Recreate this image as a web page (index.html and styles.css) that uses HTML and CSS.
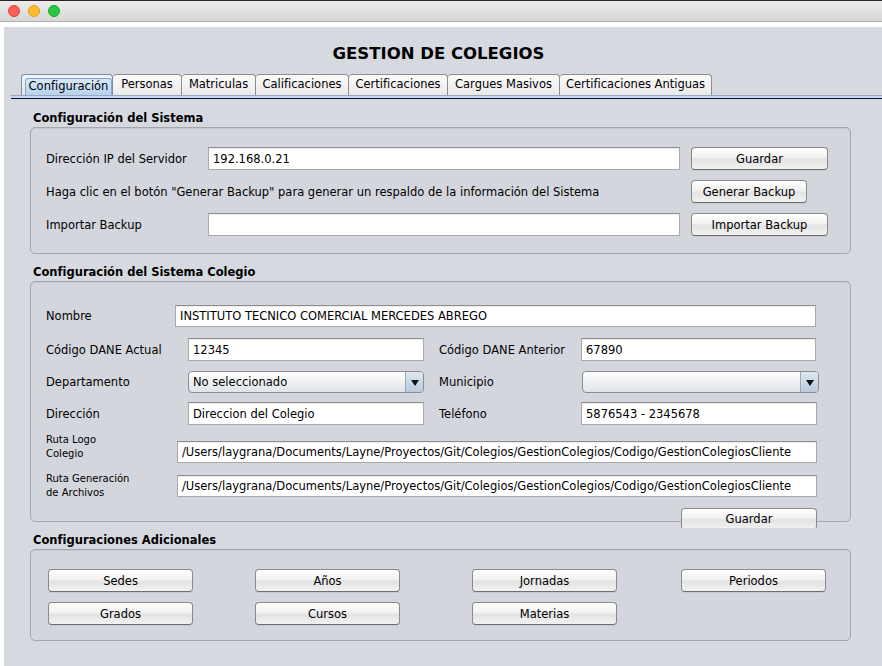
FILE: index.html
```html
<!DOCTYPE html>
<html lang="es">
<head>
<meta charset="utf-8">
<title>Gestion de Colegios</title>
<link rel="stylesheet" href="styles.css">
</head>
<body>
<div class="window">
  <div class="titlebar">
    <span class="light red"></span>
    <span class="light yellow"></span>
    <span class="light green"></span>
  </div>
  <div class="frame">
    <div class="app">
      <h1 class="app-title">GESTION DE COLEGIOS</h1>
      <div class="tabs">
        <div class="tab selected"><span>Configuración</span></div>
        <div class="tab"><span>Personas</span></div>
        <div class="tab"><span>Matriculas</span></div>
        <div class="tab"><span>Calificaciones</span></div>
        <div class="tab"><span>Certificaciones</span></div>
        <div class="tab"><span>Cargues Masivos</span></div>
        <div class="tab"><span>Certificaciones Antiguas</span></div>
      </div>
      <div class="tab-rule"></div>
      <div class="tab-content">
        <div class="group-title first">Configuración del Sistema</div>
        <div class="group group-sistema">
          <div class="row r-ip">
            <span class="lbl w162">Dirección IP del Servidor</span>
            <div class="field w472">192.168.0.21</div>
            <button class="btn w137">Guardar</button>
          </div>
          <div class="row r-gen">
            <span class="lbl w645">Haga clic en el botón "Generar Backup" para generar un respaldo de la información del Sistema</span>
            <button class="btn w116">Generar Backup</button>
          </div>
          <div class="row r-imp">
            <span class="lbl w162">Importar Backup</span>
            <div class="field w472"></div>
            <button class="btn w137">Importar Backup</button>
          </div>
        </div>

        <div class="group-title">Configuración del Sistema Colegio</div>
        <div class="group group-colegio">
          <div class="row c1">
            <span class="lbl w129">Nombre</span>
            <div class="field w641">INSTITUTO TECNICO COMERCIAL MERCEDES ABREGO</div>
          </div>
          <div class="row c2">
            <span class="lbl w142">Código DANE Actual</span>
            <div class="field w236">12345</div>
            <span class="lbl w142 col2">Código DANE Anterior</span>
            <div class="field w235">67890</div>
          </div>
          <div class="row c3">
            <span class="lbl w142">Departamento</span>
            <div class="combo w236"><span class="combo-text">No seleccionado</span><span class="combo-arrow"></span></div>
            <span class="lbl w143 col2">Municipio</span>
            <div class="combo w236"><span class="combo-text"></span><span class="combo-arrow"></span></div>
          </div>
          <div class="row c4">
            <span class="lbl w142">Dirección</span>
            <div class="field w236">Direccion del Colegio</div>
            <span class="lbl w142 col2">Teléfono</span>
            <div class="field w236">5876543 - 2345678</div>
          </div>
          <div class="row c5">
            <span class="lbl small w131">Ruta Logo<br>Colegio</span>
            <div class="field w640">/Users/laygrana/Documents/Layne/Proyectos/Git/Colegios/GestionColegios/Codigo/GestionColegiosCliente</div>
          </div>
          <div class="row c6">
            <span class="lbl small w131">Ruta Generación<br>de Archivos</span>
            <div class="field w640">/Users/laygrana/Documents/Layne/Proyectos/Git/Colegios/GestionColegios/Codigo/GestionColegiosCliente</div>
          </div>
          <div class="row c7">
            <div class="clip"><button class="btn w136">Guardar</button></div>
          </div>
        </div>

        <div class="group-title">Configuraciones Adicionales</div>
        <div class="group group-extra">
          <div class="btn-grid">
            <button class="btn">Sedes</button>
            <button class="btn">Años</button>
            <button class="btn">Jornadas</button>
            <button class="btn">Periodos</button>
            <button class="btn">Grados</button>
            <button class="btn">Cursos</button>
            <button class="btn">Materias</button>
          </div>
        </div>
      </div>
    </div>
  </div>
</div>
</body>
</html>
```
FILE: styles.css
```css
* { box-sizing: border-box; }
html, body { margin: 0; padding: 0; }
body {
  width: 882px;
  height: 666px;
  overflow: hidden;
  background: #ffffff;
  font-family: "DejaVu Sans", "Liberation Sans", sans-serif;
  font-size: 11.5px;
  color: #000;
}
.window { width: 882px; height: 666px; display: flex; flex-direction: column; }

.titlebar {
  height: 22px;
  flex: none;
  border-top: 1px solid #2b2424;
  border-bottom: 1px solid #b3b3b3;
  background: linear-gradient(#ececec, #d6d6d6);
  display: flex;
  align-items: center;
  gap: 8px;
  padding-left: 8px;
}
.light { width: 12px; height: 12px; border-radius: 50%; display: block; }
.red { background: #fc5f57; border: 1px solid #e0443e; }
.yellow { background: #fdbc2e; border: 1px solid #dea123; }
.green { background: #28c840; border: 1px solid #1aab29; }

.frame { flex: 1; padding: 5px 0 0 4px; background: #ffffff; display: flex; }
.app { flex: 1; background: #d6d9df; display: flex; flex-direction: column; }

.app-title {
  margin: 15px 0 0;
  height: 24px;
  line-height: 24px;
  text-align: center;
  font-size: 16.5px;
  font-weight: bold;
  padding-right: 9px;
}

.tabs { display: flex; margin: 8px 0 0 17px; height: 21px; }
.tab {
  height: 21px;
  padding: 0;
  justify-content: center;
  border: 1px solid #8d8d8d;
  border-bottom: none;
  border-left: none;
  border-radius: 4px 4px 0 0;
  background: linear-gradient(#fbfbfb, #e9e9e9);
  display: flex;
  align-items: center;
  line-height: 1;
  white-space: nowrap;
}
.tab:first-child { border-left: 1px solid #8d8d8d; }
.tab:nth-child(1) { width: 92px; }
.tab:nth-child(2) { width: 69px; }
.tab:nth-child(3) { width: 74px; }
.tab:nth-child(4) { width: 93px; }
.tab:nth-child(5) { width: 99px; }
.tab:nth-child(6) { width: 112px; }
.tab:nth-child(7) { width: 152px; }
.tab.selected {
  padding: 3px 0 0 3px;
  align-items: stretch;
  background: linear-gradient(#f4f4f4, #e6e6e6);
  border-color: #7b8ea8;
}
.tab.selected span {
  flex: 1;
  display: flex;
  align-items: center;
  justify-content: center;
  border: 1px solid #7fa6d6;
  border-bottom: none;
  border-radius: 3px 3px 0 0;
  background: linear-gradient(#d9e8f8, #b6d1ef);
}
.tab-rule {
  margin-left: 7px;
  height: 4px;
  border-top: 1px solid #9aa8ba;
  border-bottom: 1px solid #101030;
  background: #c4d8ef;
}

.tab-content { display: flex; flex-direction: column; padding: 0 31px 0 26px; }

.group-title {
  height: 17px;
  line-height: 17px;
  margin: 10px 0 0 3px;
  font-weight: bold;
  font-size: 11.5px;
}
.group-title.first { margin-top: 11px; }

.group {
  border: 1px solid #a4a6ab;
  border-radius: 5px;
  background: #d3d6dc;
  box-shadow: inset 0 1px 0 #c6c9cf;
  padding-left: 15px;
  display: flex;
  flex-direction: column;
}
.group-sistema { height: 127px; padding-top: 19px; }
.group-colegio { height: 241px; padding-top: 23px; }
.group-extra { height: 92px; padding-top: 19px; padding-left: 17px; }

.row { display: flex; align-items: center; }
.r-ip, .r-imp, .r-gen { height: 23px; }
.r-gen, .r-imp { margin-top: 10px; }

.lbl { flex: none; white-space: nowrap; }
.lbl.small { font-size: 10px; line-height: 14px; white-space: normal; }
.col2 { margin-left: 15px; }

.w129 { width: 129px; } .w131 { width: 131px; } .w142 { width: 142px; } .w143 { width: 143px; }
.w162 { width: 162px; } .w645 { width: 645px; }
.w116 { width: 116px; } .w136 { width: 136px; } .w137 { width: 137px; }
.w235 { width: 235px; } .w236 { width: 236px; } .w472 { width: 472px; }
.w640 { width: 640px; } .w641 { width: 641px; }

.field {
  flex: none;
  height: 23px;
  background: #ffffff;
  border: 1px solid #a9a9a9;
  border-top-color: #8e8e8e;
  box-shadow: inset 0 1px 1px rgba(0,0,0,0.08);
  padding: 0 4px;
  display: flex;
  align-items: center;
  white-space: nowrap;
  overflow: hidden;
  font-size: 11.5px;
}
.r-ip .field { margin-right: 11px; }
.r-imp .field { margin-right: 11px; }

.btn {
  flex: none;
  height: 23px;
  padding: 0;
  font-family: inherit;
  font-size: 11.5px;
  color: #000;
  border: 1px solid #8a8a8a;
  border-bottom-color: #6e6e6e;
  border-radius: 4px;
  background: linear-gradient(#ffffff 0%, #f1f1f1 45%, #e3e3e3 55%, #f2f2f2 100%);
  box-shadow: 0 1px 0 rgba(0,0,0,0.06);
  text-align: center;
}

.c1 { height: 22px; }
.c1 .field { height: 22px; }
.c2 { height: 23px; margin-top: 11px; }
.c3 { height: 22px; margin-top: 10px; }
.c4 { height: 23px; margin-top: 9px; }
.c5 { height: 30px; margin-top: 8px; align-items: flex-start; }
.c5 .field { height: 22px; margin-top: 8px; margin-left: 0; }
.c6 { height: 28px; margin-top: 9px; }
.c6 .field { height: 22px; }
.c7 { margin-top: 8px; margin-bottom: -7px; padding-left: 635px; }
.clip { height: 20px; overflow: hidden; }
.clip .btn { height: 22px; }

.combo {
  flex: none;
  height: 22px;
  border: 1px solid #8d8d8d;
  border-radius: 4px;
  background: linear-gradient(#ffffff, #eef0f3 50%, #e1e4e8);
  display: flex;
  overflow: hidden;
}
.c3 .combo:last-child { width: 237px; margin-left: 0; }
.combo-text { flex: 1; padding-left: 4px; display: flex; align-items: center; white-space: nowrap; }
.combo-arrow {
  width: 18px;
  border-left: 1px solid #9aa7b6;
  background: linear-gradient(#dde7f1, #b9cadc);
  position: relative;
}
.combo-arrow::after {
  content: "";
  position: absolute;
  left: 5px;
  top: 8px;
  border-left: 4px solid transparent;
  border-right: 4px solid transparent;
  border-top: 6px solid #111;
}

.btn-grid {
  display: grid;
  grid-template-columns: 207px 217px 209px 145px;
  row-gap: 10px;
}
.btn-grid .btn { width: 145px; height: 23px; }
```
